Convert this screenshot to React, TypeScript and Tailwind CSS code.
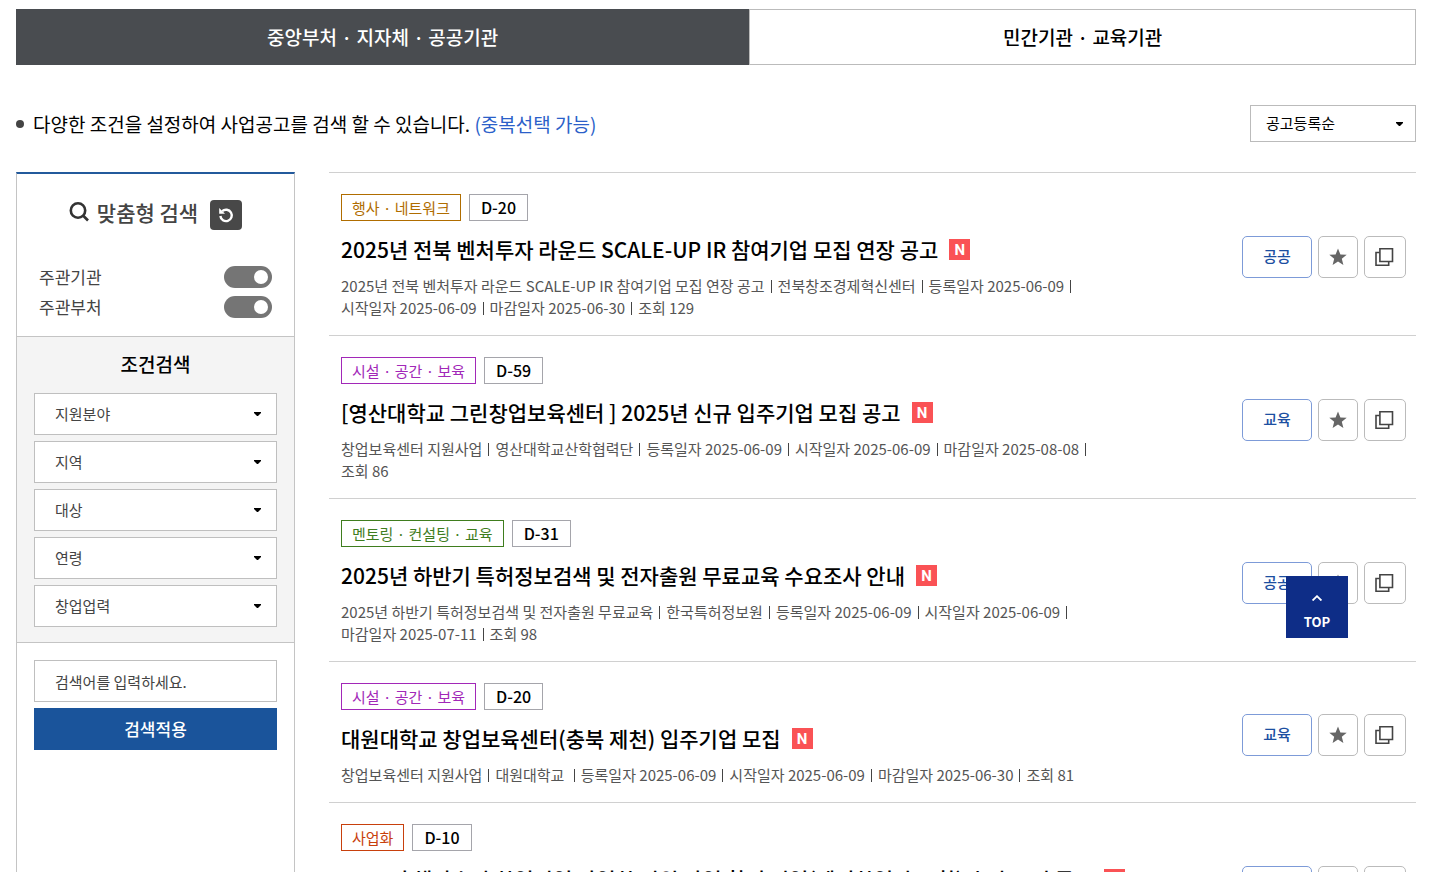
import { useState } from 'react';
import type { ReactNode } from 'react';

interface Notice {
  category: string;
  tone: string;
  dday: string;
  title: string;
  type: string;
  meta: string[];
}

const notices: Notice[] = [
  {
    category: '행사 · 네트워크',
    tone: 'border-[#b06d00] text-[#b06d00]',
    dday: 'D-20',
    title: '2025년 전북 벤처투자 라운드 SCALE-UP IR 참여기업 모집 연장 공고',
    type: '공공',
    meta: [
      '2025년 전북 벤처투자 라운드 SCALE-UP IR 참여기업 모집 연장 공고',
      '전북창조경제혁신센터',
      '등록일자 2025-06-09',
      '시작일자 2025-06-09',
      '마감일자 2025-06-30',
      '조회 129',
    ],
  },
  {
    category: '시설 · 공간 · 보육',
    tone: 'border-[#a228b8] text-[#a228b8]',
    dday: 'D-59',
    title: '[영산대학교 그린창업보육센터 ] 2025년 신규 입주기업 모집 공고',
    type: '교육',
    meta: [
      '창업보육센터 지원사업',
      '영산대학교산학협력단',
      '등록일자 2025-06-09',
      '시작일자 2025-06-09',
      '마감일자 2025-08-08',
      '조회 86',
    ],
  },
  {
    category: '멘토링 · 컨설팅 · 교육',
    tone: 'border-[#3f7d1e] text-[#3f7d1e]',
    dday: 'D-31',
    title: '2025년 하반기 특허정보검색 및 전자출원 무료교육 수요조사 안내',
    type: '공공',
    meta: [
      '2025년 하반기 특허정보검색 및 전자출원 무료교육',
      '한국특허정보원',
      '등록일자 2025-06-09',
      '시작일자 2025-06-09',
      '마감일자 2025-07-11',
      '조회 98',
    ],
  },
  {
    category: '시설 · 공간 · 보육',
    tone: 'border-[#a228b8] text-[#a228b8]',
    dday: 'D-20',
    title: '대원대학교 창업보육센터(충북 제천) 입주기업 모집',
    type: '교육',
    meta: [
      '창업보육센터 지원사업',
      '대원대학교 ',
      '등록일자 2025-06-09',
      '시작일자 2025-06-09',
      '마감일자 2025-06-30',
      '조회 81',
    ],
  },
  {
    category: '사업화',
    tone: 'border-[#c8400c] text-[#c8400c]',
    dday: 'D-10',
    title: '2025년 해양수산 창업기업 사업화 지원 사업 참여 기업(예비창업자 포함) 추가 모집 공고',
    type: '공공',
    meta: [
      '2025년 해양수산 창업기업 사업화 지원사업',
      '창조경제혁신센터',
      '등록일자 2025-06-09',
      '시작일자 2025-06-09',
      '마감일자 2025-06-19',
      '조회 112',
    ],
  },
];

const filters = ['지원분야', '지역', '대상', '연령', '창업업력'];

function Caret({ className }: { className: string }) {
  return (
    <svg
      className={`pointer-events-none absolute top-1/2 -translate-y-1/2 ${className}`}
      width="7"
      height="4"
      viewBox="0 0 7 4"
      aria-hidden="true"
    >
      <path d="M0 0h7v1L4 4H3L0 1z" fill="#000" />
    </svg>
  );
}

function Toggle({ label }: { label: string }) {
  return (
    <label className="flex h-[22px] items-center justify-between text-[17px] text-[#444]">
      {label}
      <span className="relative">
        <input
          type="checkbox"
          role="switch"
          defaultChecked
          className="peer block h-[22px] w-12 appearance-none rounded-full bg-[#757575]"
        />
        <span className="pointer-events-none absolute top-1 left-1 size-[14px] rounded-full bg-white peer-checked:left-[30px]" />
      </span>
    </label>
  );
}

function IconButton({ label, className, children }: { label: string; className: string; children: ReactNode }) {
  return (
    <button
      type="button"
      aria-label={label}
      className={`flex h-[42px] items-center justify-center rounded-[5px] border border-[#bbb] bg-white ${className}`}
    >
      {children}
    </button>
  );
}

function NoticeRow({ notice }: { notice: Notice }) {
  return (
    <li className="flex items-center justify-between border-t border-[#d0d0d0] pt-[21px] pr-[10px] pb-4 pl-3">
      <div className="w-[72%]">
        <div className="flex gap-2">
          <span className={`h-[27px] border px-[10px] text-[15px] leading-[25px] ${notice.tone}`}>
            {notice.category}
          </span>
          <span className="h-[27px] border border-[#a5a5ab] px-[11px] text-[16px] leading-[25px] font-medium text-black">
            {notice.dday}
          </span>
        </div>
        <h3 className="mt-3 flex items-center gap-[11px] text-[21px] leading-8 font-medium whitespace-nowrap text-black">
          <a href="#view">{notice.title}</a>
          <span className="size-[21px] shrink-0 bg-[#fa5255] text-center [font-family:Roboto,sans-serif] text-[15px] leading-[22px] font-bold text-white">
            N
          </span>
        </h3>
        <p className="mt-[10px] text-[15px] leading-[22px] text-[#555]">
          {notice.meta.map((text, i) => (
            <span key={text}>
              <span className="inline-block whitespace-pre">
                {text}
                {i < notice.meta.length - 1 && (
                  <span className="mx-[6px] inline-block h-[13px] w-px bg-[#444] align-[-1px]" />
                )}
              </span>
              <wbr />
            </span>
          ))}
        </p>
      </div>
      <div className="flex gap-[6px]">
        <span className="flex h-[42px] w-[70px] items-center justify-center rounded-[5px] border border-[#7d9bd8] text-[15px] font-medium text-[#1c4fa1]">
          {notice.type}
        </span>
        <IconButton label="관심 공고" className="w-10">
          <svg width="18" height="18" viewBox="0 0 18 18" aria-hidden="true">
            <path d="M9 .5l2.4 5.9 6.3.4-4.9 4 1.6 6.2L9 13.6 3.600 17l1.600-6.200-4.900-4 6.300-.4z" fill="#666" />
          </svg>
        </IconButton>
        <IconButton label="새창열기" className="w-[42px]">
          <svg width="20" height="20" viewBox="0 0 20 20" fill="none" stroke="#444" strokeWidth="1.600" aria-hidden="true">
            <path d="M4.700 5.500H1v12.700h12.700v-3.700" />
            <path d="M4.900 1.800h12.600v12.700H4.900z" />
          </svg>
        </IconButton>
      </div>
    </li>
  );
}

export default function App() {
  const [tab, setTab] = useState(0);

  return (
    <div className="bg-white pt-[9px] pr-[38px] pl-4 font-['Noto_Sans_CJK_KR','Noto_Sans',sans-serif] text-black">
      <div className="grid h-14 grid-cols-[1.1fr_1fr] text-[19px] font-medium">
        {['중앙부처 · 지자체 · 공공기관', '민간기관 · 교육기관'].map((name, i) => (
          <button
            key={name}
            type="button"
            onClick={() => setTab(i)}
            className={
              tab === i
                ? 'bg-[#494c50] text-white'
                : 'border border-[#bbb] bg-white text-black'
            }
          >
            {name}
          </button>
        ))}
      </div>

      <div className="mt-10 flex items-center justify-between">
        <p className="flex items-center text-[19px] leading-7">
          <span className="mr-[9px] size-2 rounded-full bg-[#444]" />
          <span>
            다양한 조건을 설정하여 사업공고를 검색 할 수 있습니다.{' '}
            <span className="text-[#2b5fc9]">(중복선택 가능)</span>
          </span>
        </p>
        <div className="relative">
          <select
            aria-label="정렬"
            className="h-[37px] w-[166px] appearance-none border border-[#bbb] bg-white pl-[15px] text-[15px] text-black"
          >
            <option>공고등록순</option>
            <option>마감일순</option>
          </select>
          <Caret className="right-[13px]" />
        </div>
      </div>

      <div className="mt-[30px] flex gap-[34px]">
        {/* 검색 조건 */}
        <aside className="w-[279px] shrink-0 border-x border-t-2 border-x-[#c4c4c4] border-t-[#235a9c]">
          <div className="px-[22px] pt-[26px] pb-[18px]">
            <div className="flex h-[30px] items-start justify-center">
              <div className="flex h-6 items-center gap-2">
                <svg width="20" height="20" viewBox="0 0 20 20" fill="none" stroke="#333" strokeWidth="2.600" aria-hidden="true">
                  <circle cx="9" cy="8.500" r="7.200" />
                  <path d="M14 13.500l5 5" />
                </svg>
                <h2 className="text-[21px] leading-6 font-medium text-[#444]">맞춤형 검색</h2>
              </div>
              <button
                type="button"
                aria-label="초기화"
                className="ml-3 flex h-[30px] w-8 items-center justify-center rounded-[4px] bg-[#484848]"
              >
                <svg width="16" height="16" viewBox="0 0 16 16" fill="none" stroke="#fff" strokeWidth="2.400" aria-hidden="true">
                  <path d="M4.200 4.200A5.700 5.700 0 1 1 2.400 9" />
                  <path d="M1.200 1v5.800h5.800z" fill="#fff" stroke="none" />
                </svg>
              </button>
            </div>
            <div className="mt-9 grid gap-2">
              <Toggle label="주관기관" />
              <Toggle label="주관부처" />
            </div>
          </div>

          <div className="border-y border-[#c4c4c4] bg-[#f4f4f4] px-[17px] pt-3 pb-[15px]">
            <h3 className="text-center text-[19px] leading-[30px] font-medium">조건검색</h3>
            <div className="mt-[14px] grid gap-[6px]">
              {filters.map((name) => (
                <div key={name} className="relative">
                  <select
                    aria-label={name}
                    className="h-[42px] w-full appearance-none border border-[#bfbfbf] bg-white pl-5 text-[15px] text-[#444]"
                  >
                    <option>{name}</option>
                  </select>
                  <Caret className="right-4" />
                </div>
              ))}
            </div>
          </div>

          <form className="grid gap-[6px] px-[17px] pt-[17px]" onSubmit={(e) => e.preventDefault()}>
            <input
              type="text"
              aria-label="검색어"
              placeholder="검색어를 입력하세요."
              className="h-[42px] w-full border border-[#bfbfbf] px-5 text-[15px] placeholder:text-[#444]"
            />
            <button type="submit" className="h-[42px] bg-[#1a549b] text-[17px] font-medium text-white">
              검색적용
            </button>
          </form>
        </aside>

        {/* 공고 목록 */}
        <ul className="min-w-0 flex-1">
          {notices.map((notice, i) => (
            <NoticeRow key={i} notice={notice} />
          ))}
        </ul>
      </div>

      <button
        type="button"
        onClick={() => window.scrollTo({ top: 0 })}
        className="fixed right-[106px] bottom-[234px] flex size-[62px] flex-col items-center gap-[13px] bg-[#0e2d87] pt-[19px] text-[13px] leading-4 font-bold text-white"
      >
        <svg width="10" height="6" viewBox="0 0 10 6" fill="none" stroke="#fff" strokeWidth="1.800" aria-hidden="true">
          <path d="M.6 5.500L5 1.200l4.400 4.300" />
        </svg>
        TOP
      </button>
    </div>
  );
}
